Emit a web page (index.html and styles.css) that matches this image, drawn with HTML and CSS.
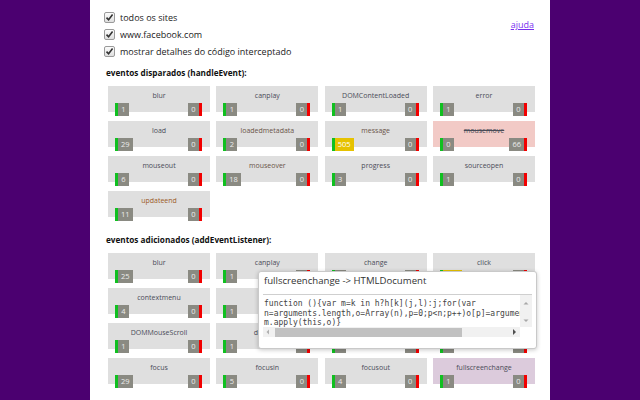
FILE: index.html
```html
<!DOCTYPE html>
<html lang="pt">
<head>
<meta charset="utf-8">
<title>eventos</title>
<link rel="stylesheet" href="styles.css">
</head>
<body>
<div class="page">
  <div class="top">
    <div class="options">
      <label class="option"><span class="box"><svg viewBox="0 0 11 11" width="11" height="11"><path d="M2.5 5.6 L4.6 7.8 L8.6 2.6" fill="none" stroke="#333" stroke-width="1.6"/></svg></span>todos os sites</label>
      <label class="option"><span class="box"><svg viewBox="0 0 11 11" width="11" height="11"><path d="M2.5 5.6 L4.6 7.8 L8.6 2.6" fill="none" stroke="#333" stroke-width="1.6"/></svg></span>www.facebook.com</label>
      <label class="option"><span class="box"><svg viewBox="0 0 11 11" width="11" height="11"><path d="M2.5 5.6 L4.6 7.8 L8.6 2.6" fill="none" stroke="#333" stroke-width="1.6"/></svg></span>mostrar detalhes do código interceptado</label>
    </div>
    <a class="help" href="#">ajuda</a>
  </div>

  <h2 class="heading first">eventos disparados (handleEvent):</h2>
  <div class="grid">
    <div class="card"><div class="name">blur</div><div class="badges"><span class="in">1</span><span class="out">0</span></div></div>
    <div class="card"><div class="name">canplay</div><div class="badges"><span class="in">1</span><span class="out">0</span></div></div>
    <div class="card"><div class="name">DOMContentLoaded</div><div class="badges"><span class="in">1</span><span class="out">0</span></div></div>
    <div class="card"><div class="name">error</div><div class="badges"><span class="in">1</span><span class="out">0</span></div></div>

    <div class="card"><div class="name">load</div><div class="badges"><span class="in">29</span><span class="out">0</span></div></div>
    <div class="card"><div class="name warm">loadedmetadata</div><div class="badges"><span class="in">2</span><span class="out">0</span></div></div>
    <div class="card"><div class="name warm">message</div><div class="badges"><span class="in hot">505</span><span class="out">0</span></div></div>
    <div class="card blocked"><div class="name">mousemove</div><div class="badges"><span class="in">0</span><span class="out">66</span></div></div>

    <div class="card"><div class="name">mouseout</div><div class="badges"><span class="in">6</span><span class="out">0</span></div></div>
    <div class="card"><div class="name warm">mouseover</div><div class="badges"><span class="in">18</span><span class="out">0</span></div></div>
    <div class="card"><div class="name">progress</div><div class="badges"><span class="in">3</span><span class="out">0</span></div></div>
    <div class="card"><div class="name">sourceopen</div><div class="badges"><span class="in">1</span><span class="out">0</span></div></div>

    <div class="card"><div class="name orange">updateend</div><div class="badges"><span class="in">11</span><span class="out">0</span></div></div>
  </div>

  <h2 class="heading second">eventos adicionados (addEventListener):</h2>
  <div class="grid">
    <div class="card"><div class="name">blur</div><div class="badges"><span class="in">25</span><span class="out">0</span></div></div>
    <div class="card"><div class="name">canplay</div><div class="badges"><span class="in">1</span><span class="out">0</span></div></div>
    <div class="card"><div class="name">change</div><div class="badges"><span class="in">1</span><span class="out">0</span></div></div>
    <div class="card"><div class="name">click</div><div class="badges"><span class="in hot">120</span><span class="out">0</span></div></div>

    <div class="card"><div class="name">contextmenu</div><div class="badges"><span class="in">4</span><span class="out">0</span></div></div>
    <div class="card"><div class="name">copy</div><div class="badges"><span class="in">1</span><span class="out">0</span></div></div>
    <div class="card"><div class="name">cut</div><div class="badges"><span class="in">1</span><span class="out">0</span></div></div>
    <div class="card"><div class="name">dblclick</div><div class="badges"><span class="in">1</span><span class="out">0</span></div></div>

    <div class="card"><div class="name">DOMMouseScroll</div><div class="badges"><span class="in">1</span><span class="out">0</span></div></div>
    <div class="card"><div class="name">dragend</div><div class="badges"><span class="in">1</span><span class="out">0</span></div></div>
    <div class="card"><div class="name">drop</div><div class="badges"><span class="in">1</span><span class="out">0</span></div></div>
    <div class="card"><div class="name">error</div><div class="badges"><span class="in">1</span><span class="out">0</span></div></div>

    <div class="card"><div class="name">focus</div><div class="badges"><span class="in">29</span><span class="out">0</span></div></div>
    <div class="card"><div class="name">focusin</div><div class="badges"><span class="in">5</span><span class="out">0</span></div></div>
    <div class="card"><div class="name">focusout</div><div class="badges"><span class="in">4</span><span class="out">0</span></div></div>
    <div class="card selected"><div class="name">fullscreenchange</div><div class="badges"><span class="in">1</span><span class="out">0</span></div></div>
  </div>

  <div class="tooltip">
    <div class="tip-title">fullscreenchange -&gt; HTMLDocument</div>
    <div class="code-box">
      <pre class="code">function (){var m=k in h?h[k](j,l):j;for(var
n=arguments.length,o=Array(n),p=0;p&lt;n;p++)o[p]=arguments[p];return
m.apply(this,o)}</pre>
      <div class="vscroll">
        <svg width="12" height="8" viewBox="0 0 12 8"><path d="M3.5 5.5 L6 3 L8.5 5.5 Z" fill="#a8a8a8"/></svg>
        <svg width="12" height="8" viewBox="0 0 12 8"><path d="M3.5 2.5 L6 5 L8.5 2.5 Z" fill="#a8a8a8"/></svg>
      </div>
      <div class="hscroll">
        <svg class="arrow" width="10" height="10" viewBox="0 0 10 10"><path d="M6 2.5 L3.5 5 L6 7.5 Z" fill="#b0b0b0"/></svg>
        <div class="thumb"></div>
        <svg class="arrow right" width="10" height="10" viewBox="0 0 10 10"><path d="M4 2 L7 5 L4 8 Z" fill="#505050"/></svg>
      </div>
      <div class="corner"></div>
    </div>
  </div>
</div>
</body>
</html>
```

FILE: styles.css
```css
html, body {
  margin: 0;
  height: 100%;
  overflow: hidden;
}
body {
  background: #4b0070;
  font-family: "Open Sans", "DejaVu Sans", sans-serif;
  color: #222;
}
.page {
  position: relative;
  width: 460px;
  height: 400px;
  margin-left: 90px;
  background: #fff;
  box-sizing: border-box;
}
.top {
  display: flex;
  justify-content: space-between;
  align-items: flex-start;
  padding: 12px 16px 0 14px;
}
.options {
  display: flex;
  flex-direction: column;
  gap: 6px;
}
.option {
  display: flex;
  align-items: center;
  gap: 5px;
  height: 11px;
  font-size: 9px;
  color: #222;
}
.box {
  width: 11px;
  height: 11px;
  box-sizing: border-box;
  border: 1px solid #9a9a9a;
  border-radius: 2px;
  background: linear-gradient(#fcfcfc, #dedede);
  display: flex;
  align-items: center;
  justify-content: center;
  overflow: hidden;
}
.box svg { display: block; flex: none; }
.help {
  margin-top: 6px;
  font-size: 9px;
  color: #7a2ff0;
  text-decoration: underline;
}
.heading {
  margin: 0;
  padding-left: 16px;
  font-size: 8.2px;
  line-height: 10px;
  font-weight: 700;
  color: #111;
}
.heading.first { margin-top: 11px; }
.heading.second { margin-top: 18px; }
.grid {
  display: grid;
  grid-template-columns: repeat(4, 102px);
  column-gap: 6.33px;
  row-gap: 9px;
  padding-left: 18px;
  margin-top: 8px;
}
.heading.second + .grid { margin-top: 8px; }
.card {
  height: 26px;
  background: #dfdfdf;
  display: flex;
  flex-direction: column;
}
.card.blocked { background: #f2cac6; }
.card.blocked .name { text-decoration: line-through; }
.card.selected { background: #dccbdc; }
.name {
  padding-top: 5px;
  height: 10px;
  line-height: 10px;
  font-size: 7px;
  text-align: center;
  color: #4a4c58;
}
.name.warm { color: #6a5448; }
.name.orange { color: #9c5a26; }
.badges {
  display: flex;
  justify-content: space-between;
  margin-top: 2px;
  padding: 0 8px 0 7px;
}
.badges span {
  display: block;
  height: 13px;
  line-height: 13px;
  min-width: 5px;
  padding: 0 3px;
  font-size: 7.5px;
  text-align: center;
  color: #ececec;
  background: #8a8a82;
}
.badges .in { border-left: 3px solid #10c020; }
.badges .out { border-right: 3px solid #f20000; }
.badges .in.hot { background: #e6c200; color: #fff; }

.tooltip {
  position: absolute;
  left: 168px;
  top: 271px;
  width: 279px;
  height: 78px;
  box-sizing: border-box;
  background: #fff;
  border: 1px solid #c9c9c9;
  border-radius: 3px;
  box-shadow: 0 1px 4px rgba(0,0,0,0.22);
  padding: 4px 4px 0 4px;
}
.tip-title {
  font-size: 9.6px;
  line-height: 10px;
  color: #333;
  padding-left: 1px;
}
.code-box {
  margin-top: 8px;
  border-top: 1px solid #cfcfcf;
  display: grid;
  grid-template-columns: 257px 12px;
  grid-template-rows: 32px 10px;
}
.code {
  margin: 0;
  padding: 4px 0 0 1px;
  overflow: hidden;
  font-family: "DejaVu Sans Mono", monospace;
  font-size: 8px;
  line-height: 9.5px;
  color: #444;
  white-space: pre;
}
.vscroll {
  background: #f1f1f1;
  display: flex;
  flex-direction: column;
  justify-content: space-between;
  padding: 4px 0 2px;
}
.vscroll svg { display: block; }
.hscroll {
  background: #f1f1f1;
  display: flex;
  align-items: center;
}
.hscroll .arrow { display: block; flex: none; }
.hscroll .thumb {
  width: 187px;
  height: 9px;
  margin-left: 2px;
  background: #c1c1c1;
}
.hscroll .right { margin-left: auto; margin-right: 1px; }
.corner { background: #fff; }
```
